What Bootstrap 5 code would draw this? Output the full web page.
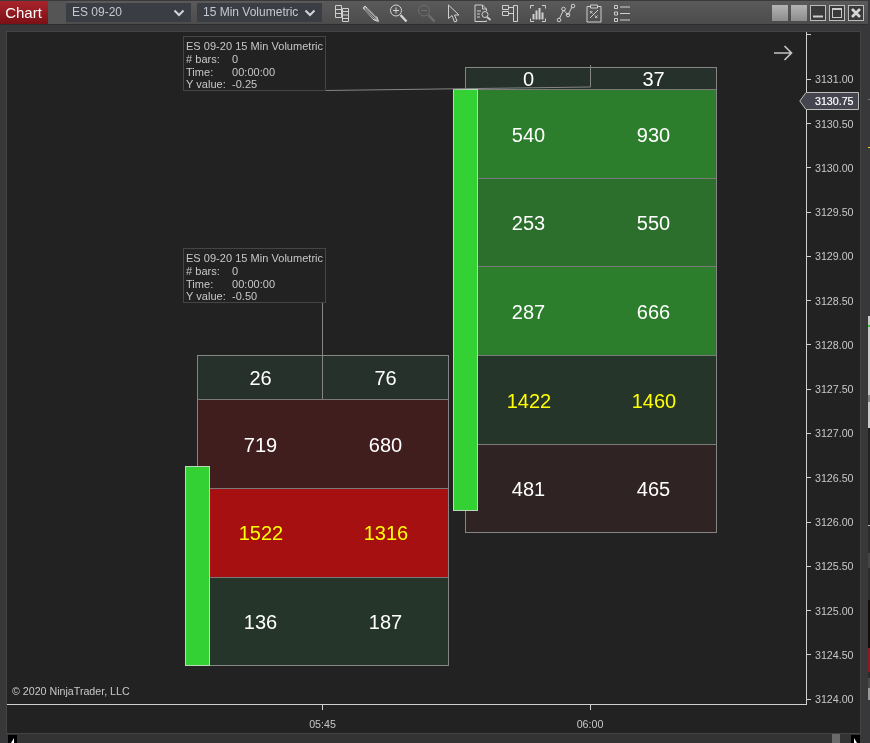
<!DOCTYPE html>
<html lang="en">
<head>
<meta charset="utf-8">
<title>Chart</title>
<link rel="stylesheet" href="https://cdn.jsdelivr.net/npm/bootstrap@5.3.0/dist/css/bootstrap.min.css">
<style>
html,body{margin:0;height:743px;overflow:hidden;background:#38383b}
body,.nt-root *{font-family:"Liberation Sans",Arial,sans-serif}
.nt-root{width:870px;height:743px;will-change:transform}
.nt-win{width:868px;height:743px;flex:none}
.nt-strip{width:2px;height:743px;flex:none;background:linear-gradient(to bottom,#38383b 0,#38383b 99px,#777 99px,#777 100px,#38383b 100px,#38383b 147px,#e8d820 147px,#e8d820 148px,#38383b 148px,#38383b 316px,#ccc 316px,#ccc 325px,#3c3 325px,#3c3 327px,#ccc 327px,#ccc 395px,#888 395px,#888 402px,#ccc 402px,#ccc 428px,#222 428px,#222 525px,#bbb 525px,#bbb 526px,#2c2c2c 526px,#2c2c2c 553px,#444 553px,#444 568px,#2c2c2c 568px,#2c2c2c 600px,#140f0a 600px,#140f0a 648px,#8a1a24 648px,#8a1a24 672px,#2c2c2c 672px,#2c2c2c 678px,#4a4a4a 678px,#4a4a4a 688px,#999 688px,#999 700px,#38383b 700px)}
.nt-toolbar{height:25px;background:linear-gradient(#5a5a5a,#4c4c4c);border-top:1px solid #3a3a3a;border-bottom:1px solid #2e2e2e}
.nt-chart-btn{width:48px;height:23px;background:linear-gradient(#a8242c,#7c1016);color:#fff;font-size:15px;line-height:23px;text-align:center;padding-right:1px}
.nt-sep{width:18px;height:23px;background:#555}
.nt-dd{width:125px;height:19px;background:#3b3d45;color:#c6c8d0;font-size:12px;line-height:19px;padding:0 6px 0 6px;border:0;border-radius:0;margin-right:6px}
.nt-dd svg{width:12px;height:8px}
.nt-ico{width:28px;height:23px}
.nt-ico svg{width:20px;height:20px;display:block}
.nt-wbtns{gap:3px;margin-right:4px}
.nt-wb{width:16px;height:16px;display:block}
.nt-body{flex:1 1 auto;padding:6px 7px 0 6px;min-height:0}
.nt-frame{height:703px;background:#222;border:1px solid #444}
.nt-plot{width:800px;height:673px;flex:none;border-right:1px solid #d0d0d0;border-bottom:1px solid #d0d0d0;overflow:hidden}
.nt-axis{width:53px;height:673px;flex:none;position:relative}
.nt-ticks{margin-top:-19.2px}
.nt-trow{height:44.286px;color:#c8c8c8;font-size:10.67px}
.nt-trow i{display:block;width:4px;height:1px;background:#d0d0d0;margin-right:4px}
.nt-price{position:absolute;left:-8px;top:60px;width:60px;height:18px}
.nt-price svg{position:absolute;inset:0}
.nt-price span{position:absolute;left:16px;top:0;line-height:18px;color:#fff;font-size:10.67px;-webkit-text-stroke:.2px #fff}
.nt-time{height:28px;position:relative;color:#c8c8c8;font-size:10.67px}
.nt-tt{position:absolute;top:0;width:40px;text-align:center}
.nt-tt i{display:block;width:1px;height:5px;background:#d0d0d0;margin:0 auto 6px}
.nt-t1{left:296px;width:39px}
.nt-t2{left:563px}
.nt-copy{position:absolute;left:5px;top:652px;color:#c8c8c8;font-size:10.67px;line-height:14px}
.nt-fp{position:absolute;display:grid;width:252px;border:1px solid #858585;color:#fff;font-size:20px}
.nt-fp-l{left:190px;top:323px;height:311px;grid-template-rows:44px 89px 89px 87px}
.nt-fp-r{left:458px;top:35px;height:466px;grid-template-rows:22px 89px 88px 89px 89px 87px}
.nt-fr{display:grid;grid-template-columns:125px 125px;align-items:center;text-align:center;border-bottom:1px solid #7a7a7a;line-height:20px}
.nt-fr:last-child{border-bottom:0}
.nt-dn{padding-top:2px}
.c-head{background:#25312a}
.c-dg{background:#25352a}
.c-g1{background:#2c7e2c}
.c-g2{background:#2c6e2c}
.c-r1{background:#411e1e}
.c-r2{background:#a61010}
.c-br{background:#2f2423}
.c-y{color:#ff0}
.c-y span{padding-left:1px}
.nt-candle{position:absolute;width:25px;background:#33d133;border:1px solid #bcd8bc}
.nt-cl{left:178px;top:434px;height:200px}
.nt-cr{left:446px;top:57px;height:422px}
.nt-tip{position:absolute;left:176px;width:143px;height:55px;background:#222;border:1px solid #454545;color:#c8c8c8;font-size:11px;letter-spacing:.03px;line-height:13px;padding:3px 0 0 2px;white-space:nowrap}
.nt-tip1{top:4px}
.nt-tip2{top:216px}
.nt-tipgrid{display:grid;grid-template-columns:46px 1fr}
.nt-tl{margin-top:-1px}
.nt-over{position:absolute;left:0;top:0;pointer-events:none}
.nt-scroll{height:9px;margin:0 8px 0 8px;background:#333;position:relative}
.nt-sb{width:9px;height:8px;background:#000;margin-top:1px}
.nt-sb svg{display:block;width:9px;height:8px}
.nt-thumb{width:8px;height:9px;background:#6a6a6a;margin-right:11px}
</style>
</head>
<body>
<div class="nt-root d-flex">
<div class="nt-win d-flex flex-column">
  <div class="nt-toolbar d-flex align-items-center">
    <div class="nt-chart-btn">Chart</div>
    <div class="nt-sep"></div>
    <button type="button" class="btn nt-dd d-flex align-items-center justify-content-between"><span>ES 09-20</span><svg viewBox="0 0 12 8"><path d="M1.500 1.500 6 6l4.500-4.500" fill="none" stroke="#d4d4d8" stroke-width="2"/></svg></button>
    <button type="button" class="btn nt-dd d-flex align-items-center justify-content-between"><span>15 Min Volumetric</span><svg viewBox="0 0 12 8"><path d="M1.500 1.500 6 6l4.500-4.500" fill="none" stroke="#d4d4d8" stroke-width="2"/></svg></button>
    <div class="d-flex">
      <div class="nt-ico d-flex align-items-center justify-content-center"><svg viewBox="0 0 20 20" fill="none" stroke="#cfcfcf"><path d="M3.500 2.500h6v12h-6zM3.500 6.500h6M3.500 10.500h6M10.500 5.500h6v13h-6zM10.500 8.500h6M10.500 12h6M10.500 15.500h6"/></svg></div>
      <div class="nt-ico d-flex align-items-center justify-content-center"><svg viewBox="0 0 20 20"><path d="M5 3 17 14l1.500 4.500-4.500-1.500L3 5z" fill="#a0a0a0" stroke="#d4d4d4" stroke-width="1"/><path d="M5 5.500l10.500 10M7 4.500l9.500 9M4.500 7l9.500 9" stroke="#5a5a5a" stroke-width="1"/></svg></div>
      <div class="nt-ico d-flex align-items-center justify-content-center"><svg viewBox="0 0 20 20" fill="none" stroke="#d4d4d4"><circle cx="8" cy="7.500" r="5.500"/><path d="M8 4.500v6M5 7.500h6"/><path d="M12.500 12l6 6.500" stroke-width="2.400"/></svg></div>
      <div class="nt-ico d-flex align-items-center justify-content-center"><svg viewBox="0 0 20 20" fill="none" stroke="#6e6e6e"><circle cx="8" cy="7.500" r="5.500"/><path d="M5 7.500h6"/><path d="M12.500 12l6 6.500" stroke-width="2.400"/></svg></div>
      <div class="nt-ico d-flex align-items-center justify-content-center"><svg viewBox="0 0 20 20" fill="none" stroke="#cfcfcf"><path d="M4.500 2v13.500l3.500-3 2.500 6.500 2.500-1-2.500-6h4.500z"/></svg></div>
      <div class="nt-ico d-flex align-items-center justify-content-center"><svg viewBox="0 0 20 20" fill="none" stroke="#cfcfcf"><path d="M14.500 8V6L10.500 2h-7.500v16.500h11.500v-1M10.500 2v4h4M5 8h4M5 11h3M5 14h3"/><circle cx="13" cy="11.500" r="3"/><path d="M15 14l3.500 3" stroke-width="1.800"/></svg></div>
      <div class="nt-ico d-flex align-items-center justify-content-center"><svg viewBox="0 0 20 20" fill="none" stroke="#cfcfcf"><path d="M2.500 2.500h6v4h-6zM2.500 8.500h6v4h-6zM8.500 4.500h5M8.500 10.500h5M13.500 2.500h4v16h-4z"/></svg></div>
      <div class="nt-ico d-flex align-items-center justify-content-center"><svg viewBox="0 0 20 20" fill="none" stroke="#cfcfcf"><path d="M6 2.500H2.500v3M14 2.500h3.500v3M6 18.500H2.500v-3M14 18.500h3.500v-3"/><path d="M5.500 11v5.500M8.500 7.500v9M11.500 5v11.500M14.500 9.500v7" stroke-width="2"/></svg></div>
      <div class="nt-ico d-flex align-items-center justify-content-center"><svg viewBox="0 0 20 20" fill="none" stroke="#cfcfcf"><path d="M3.500 15.500 7.500 7l4.500 5 4-8"/><circle cx="3" cy="17" r="1.800"/><circle cx="7.500" cy="6" r="1.800"/><circle cx="12" cy="12" r="1.800"/><circle cx="17" cy="3" r="1.800"/></svg></div>
      <div class="nt-ico d-flex align-items-center justify-content-center"><svg viewBox="0 0 20 20" fill="none" stroke="#cfcfcf"><path d="M6.500 3.500h-3.500v15.500h14V3.500h-3.500M6.500 2h7v3h-7z"/><path d="M6 8l2.500 2.500M8.500 8 6 10.500M11 12.500l2.500 2.500M13.500 12.500 11 15M6 15 14 7"/></svg></div>
      <div class="nt-ico d-flex align-items-center justify-content-center"><svg viewBox="0 0 20 20" fill="none" stroke="#cfcfcf"><path d="M2.500 2.500h3v3h-3zM2.500 9h3v3h-3zM2.500 15.500h3v3h-3zM8 4h10M8 10.500h10M8 17h10"/></svg></div>
    </div>
    <div class="nt-wbtns d-flex ms-auto">
      <svg class="nt-wb" viewBox="0 0 16 16"><defs><linearGradient id="g1" x1="0" y1="0" x2="0" y2="1"><stop offset="0" stop-color="#b4b4b4"/><stop offset="1" stop-color="#8c8c8c"/></linearGradient></defs><rect width="16" height="16" fill="url(#g1)"/></svg>
      <svg class="nt-wb" viewBox="0 0 16 16"><rect width="16" height="16" fill="url(#g1)"/></svg>
      <svg class="nt-wb" viewBox="0 0 16 16"><rect x=".5" y=".5" width="15" height="15" fill="#3a3a3a" stroke="#bdbdbd"/><path d="M3 11.500h10" stroke="#ccc" stroke-width="2"/></svg>
      <svg class="nt-wb" viewBox="0 0 16 16"><rect x=".5" y=".5" width="15" height="15" fill="#3a3a3a" stroke="#bdbdbd"/><rect x="3.500" y="3.500" width="9" height="9" fill="none" stroke="#ccc"/><path d="M3 4h10" stroke="#ccc" stroke-width="2"/></svg>
      <svg class="nt-wb" viewBox="0 0 16 16"><rect x=".5" y=".5" width="15" height="15" fill="#3a3a3a" stroke="#bdbdbd"/><path d="M4 4l8 8M12 4l-8 8" stroke="#d8d8d8" stroke-width="2.600"/></svg>
    </div>
  </div>
  <div class="nt-body">
    <div class="nt-frame">
      <div class="d-flex">
        <div class="nt-plot position-relative">
          <div class="nt-fp nt-fp-l">
            <div class="nt-fr c-head"><span>26</span><span>76</span></div>
            <div class="nt-fr c-r1 nt-dn"><span>719</span><span>680</span></div>
            <div class="nt-fr c-r2 c-y"><span>1522</span><span>1316</span></div>
            <div class="nt-fr c-dg"><span>136</span><span>187</span></div>
          </div>
          <div class="nt-fp nt-fp-r">
            <div class="nt-fr c-head"><span>0</span><span>37</span></div>
            <div class="nt-fr c-g1 nt-dn"><span>540</span><span>930</span></div>
            <div class="nt-fr c-g2"><span>253</span><span>550</span></div>
            <div class="nt-fr c-g1 nt-dn"><span>287</span><span>666</span></div>
            <div class="nt-fr c-dg c-y nt-dn"><span>1422</span><span>1460</span></div>
            <div class="nt-fr c-br"><span>481</span><span>465</span></div>
          </div>
          <div class="nt-candle nt-cl"></div>
          <div class="nt-candle nt-cr"></div>
          <svg class="nt-over" width="799" height="672" viewBox="7 32 799 672" fill="none">
            <path d="M325.500 90.500 590.500 87V65" stroke="#858585"/>
            <path d="M322.500 302V399" stroke="#858585"/>
            <path d="M774 53h17M784.500 46l7 7-7 7" stroke="#c4c4c4" stroke-width="1.700"/>
          </svg>
          <div class="nt-tip nt-tip1">
            <div>ES 09-20 15 Min Volumetric</div>
            <div class="nt-tipgrid"><span># bars:</span><span>0</span><span>Time:</span><span>00:00:00</span><span class="nt-tl">Y value:</span><span class="nt-tl">-0.25</span></div>
          </div>
          <div class="nt-tip nt-tip2">
            <div>ES 09-20 15 Min Volumetric</div>
            <div class="nt-tipgrid"><span># bars:</span><span>0</span><span>Time:</span><span>00:00:00</span><span class="nt-tl">Y value:</span><span class="nt-tl">-0.50</span></div>
          </div>
          <div class="nt-copy">© 2020 NinjaTrader, LLC</div>
        </div>
        <div class="nt-axis">
          <div class="nt-ticks">
            <div class="nt-trow d-flex align-items-center"><i></i></div>
            <div class="nt-trow d-flex align-items-center"><i></i><span>3131.00</span></div>
            <div class="nt-trow d-flex align-items-center"><i></i><span>3130.50</span></div>
            <div class="nt-trow d-flex align-items-center"><i></i><span>3130.00</span></div>
            <div class="nt-trow d-flex align-items-center"><i></i><span>3129.50</span></div>
            <div class="nt-trow d-flex align-items-center"><i></i><span>3129.00</span></div>
            <div class="nt-trow d-flex align-items-center"><i></i><span>3128.50</span></div>
            <div class="nt-trow d-flex align-items-center"><i></i><span>3128.00</span></div>
            <div class="nt-trow d-flex align-items-center"><i></i><span>3127.50</span></div>
            <div class="nt-trow d-flex align-items-center"><i></i><span>3127.00</span></div>
            <div class="nt-trow d-flex align-items-center"><i></i><span>3126.50</span></div>
            <div class="nt-trow d-flex align-items-center"><i></i><span>3126.00</span></div>
            <div class="nt-trow d-flex align-items-center"><i></i><span>3125.50</span></div>
            <div class="nt-trow d-flex align-items-center"><i></i><span>3125.00</span></div>
            <div class="nt-trow d-flex align-items-center"><i></i><span>3124.50</span></div>
            <div class="nt-trow d-flex align-items-center"><i></i><span>3124.00</span></div>
          </div>
          <div class="nt-price">
            <svg width="60" height="18" viewBox="0 0 60 18"><path d="M.8 9 7 .5h52.500v17H7z" fill="#44454f" stroke="#bdbdbd"/></svg>
            <span>3130.75</span>
          </div>
        </div>
      </div>
      <div class="nt-time">
        <div class="nt-tt nt-t1"><i></i>05:45</div>
        <div class="nt-tt nt-t2"><i></i>06:00</div>
      </div>
    </div>
  </div>
  <div class="nt-scroll d-flex justify-content-between">
    <div class="nt-sb"><svg viewBox="0 0 9 8"><path d="M6 3v5H3z" fill="#fff"/></svg></div>
    <div class="d-flex ms-auto">
      <div class="nt-thumb"></div>
      <div class="nt-sb"><svg viewBox="0 0 9 8"><path d="M3 3v5h3z" fill="#fff"/></svg></div>
    </div>
  </div>
</div>
<div class="nt-strip"></div>
</div>
<script src="https://cdn.jsdelivr.net/npm/bootstrap@5.3.0/dist/js/bootstrap.bundle.min.js"></script>
</body>
</html>
